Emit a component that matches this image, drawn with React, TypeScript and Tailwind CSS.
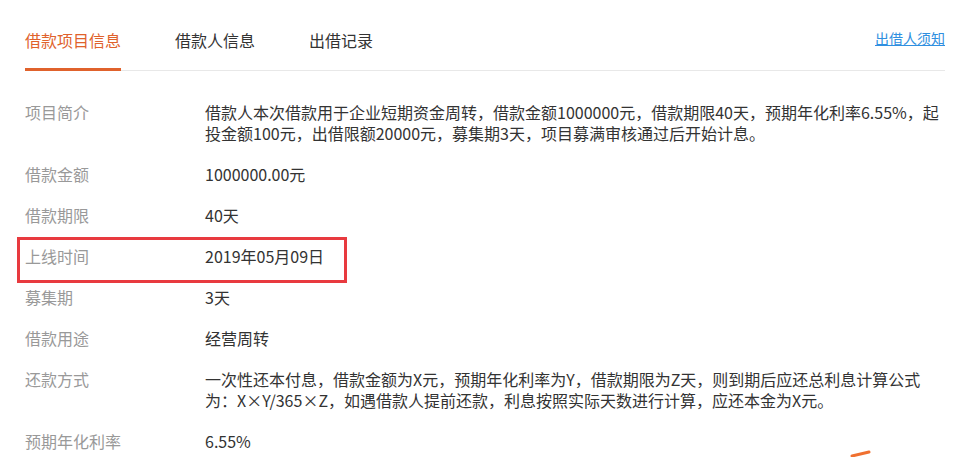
import React from 'react';

type Row = {
  label: string;
  lines: string[];
};

const rows: Row[] = [
  {
    label: '项目简介',
    lines: [
      '借款人本次借款用于企业短期资金周转，借款金额1000000元，借款期限40天，预期年化利率6.55%，起',
      '投金额100元，出借限额20000元，募集期3天，项目募满审核通过后开始计息。',
    ],
  },
  { label: '借款金额', lines: ['1000000.00元'] },
  { label: '借款期限', lines: ['40天'] },
  { label: '上线时间', lines: ['2019年05月09日'] },
  { label: '募集期', lines: ['3天'] },
  { label: '借款用途', lines: ['经营周转'] },
  {
    label: '还款方式',
    lines: [
      '一次性还本付息，借款金额为X元，预期年化利率为Y，借款期限为Z天，则到期后应还总利息计算公式',
      '为：X×Y/365×Z，如遇借款人提前还款，利息按照实际天数进行计算，应还本金为X元。',
    ],
  },
  { label: '预期年化利率', lines: ['6.55%'] },
];

const tabs = ['借款项目信息', '借款人信息', '出借记录'];

export default function App() {
  return (
    <div className="relative h-[457px] w-[970px] overflow-hidden bg-white font-['Noto_Sans_CJK_SC','Noto_Sans',sans-serif]">
      <div className="px-[25px]">
        {/* tab bar */}
        <div className="flex items-start justify-between border-b border-[#e8e8e8]">
          <div className="flex gap-[54px] pt-[30px]">
            {tabs.map((t, i) => (
              <div
                key={t}
                className={`-mb-px border-b-[3px] pb-[18px] text-[16px] leading-[20px] ${
                  i === 0 ? 'border-[#e0622c] text-[#e0622c]' : 'border-transparent text-[#333]'
                }`}
              >
                {t}
              </div>
            ))}
          </div>
          <a href="#" className="pt-[28px] text-[14px] leading-[20px] text-[#2f8fe0] underline">
            出借人须知
          </a>
        </div>

        {/* detail rows */}
        <div className="flex flex-col gap-[20px] pt-[31px]">
          {rows.map((r) => (
            <div key={r.label} className="flex text-[16px] leading-[21px]">
              <div className="w-[180px] shrink-0 text-[#999]">{r.label}</div>
              <p className="flex-1 whitespace-nowrap text-[#333]">
                {r.lines.map((l, i) => (
                  <React.Fragment key={l}>
                    {i > 0 && <br />}
                    {l}
                  </React.Fragment>
                ))}
              </p>
            </div>
          ))}
        </div>
      </div>

      {/* annotation box */}
      <div className="absolute left-[17px] top-[237px] h-[46px] w-[330px] border-[3px] border-[#e83a3f]" />

      {/* annotation arrow tail */}
      <svg className="absolute left-[848px] top-[444px]" width="26" height="13" viewBox="0 0 26 13">
        <path d="M4 12 L21 8" stroke="#f07030" strokeWidth="3" strokeLinecap="round" fill="none" />
      </svg>
    </div>
  );
}
